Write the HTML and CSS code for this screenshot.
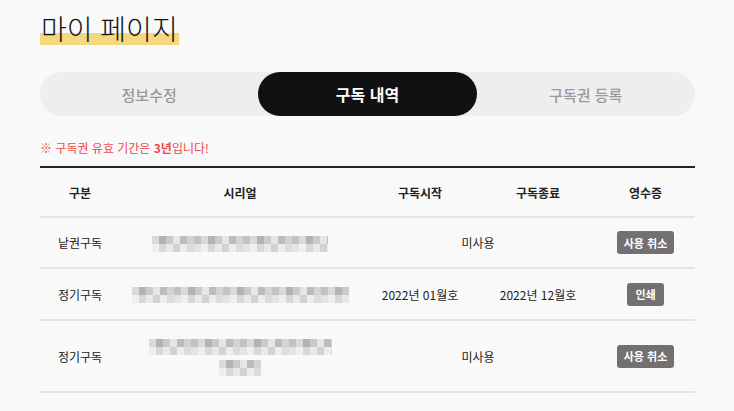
FILE: index.html
```html
<!DOCTYPE html>
<html lang="ko">
<head>
    <meta charset="UTF-8">
    <title>마이 페이지</title>
    <link rel="stylesheet" href="styles.css">
</head>
<body>
    <div class="wrap">
        <h1 class="title"><span>마이 페이지</span></h1>

        <ul class="tabs">
            <li>정보수정</li>
            <li class="on">구독 내역</li>
            <li>구독권 등록</li>
        </ul>

        <p class="notice">※ 구독권 유효 기간은 <b>3년</b>입니다!</p>

        <table class="list">
            <colgroup>
                <col class="c1">
                <col class="c2">
                <col class="c3">
                <col class="c4">
                <col class="c5">
            </colgroup>
            <thead>
                <tr>
                    <th>구분</th>
                    <th>시리얼</th>
                    <th>구독시작</th>
                    <th>구독종료</th>
                    <th>영수증</th>
                </tr>
            </thead>
            <tbody>
                <tr>
                    <td>낱권구독</td>
                    <td><span class="mosaic m1"></span></td>
                    <td colspan="2">미사용</td>
                    <td><button class="btn">사용 취소</button></td>
                </tr>
                <tr class="mid">
                    <td>정기구독</td>
                    <td><span class="mosaic m2"></span></td>
                    <td>2022년 01월호</td>
                    <td>2022년 12월호</td>
                    <td><button class="btn">인쇄</button></td>
                </tr>
                <tr class="tall">
                    <td>정기구독</td>
                    <td><span class="mosaic m3"></span><br><span class="mosaic m4"></span></td>
                    <td colspan="2">미사용</td>
                    <td><button class="btn">사용 취소</button></td>
                </tr>
            </tbody>
        </table>
    </div>
</body>
</html>
```

FILE: styles.css
```css
* {
    margin: 0;
    padding: 0;
    list-style: none;
    box-sizing: border-box;
}

body {
    background: #f9f9f9;
    font-family: "Noto Sans CJK KR", "Noto Sans", sans-serif;
    color: #222;
}

.wrap {
    width: 655px;
    margin-left: 40px;
    padding-top: 8px;
}

/* 제목 */
.title {
    font-size: 28px;
    font-weight: 300;
    line-height: 40px;
    color: #111;
}

.title span {
    background: linear-gradient(transparent 62%, #f5d77d 62%, #f5d77d 93%, transparent 93%);
    padding: 0 1px;
}

/* 탭 */
.tabs {
    display: grid;
    grid-template-columns: repeat(3, 1fr);
    height: 44px;
    margin-top: 24px;
    background: #eeeeee;
    border-radius: 22px;
}

.tabs li {
    display: flex;
    align-items: center;
    justify-content: center;
    font-size: 15px;
    font-weight: 500;
    color: #999;
    border-radius: 22px;
    cursor: pointer;
}

.tabs .on {
    background: #111;
    color: #fff;
    font-weight: 700;
    font-size: 16px;
}

.notice {
    margin-top: 23px;
    font-size: 12px;
    line-height: 18px;
    color: #f04a4a;
}

.notice b {
    font-weight: 700;
}

/* 목록 */
.list {
    width: 100%;
    margin-top: 9px;
    border-collapse: collapse;
    border-top: 2px solid #222;
    font-size: 12px;
    text-align: center;
}

.list .c1 { width: 80px; }
.list .c2 { width: 240px; }
.list .c3 { width: 120px; }
.list .c4 { width: 116px; }
.list .c5 { width: 99px; }

.list th {
    height: 50px;
    font-weight: 700;
    border-bottom: 2px solid #e4e4e4;
}

.list td {
    height: 51px;
    border-bottom: 2px solid #e4e4e4;
    color: #222;
}

.list .mid td {
    height: 52px;
}

.list .tall td {
    height: 72px;
}

.btn {
    border: 0;
    border-radius: 3px;
    background: #727071;
    color: #fff;
    font-family: inherit;
    font-size: 11px;
    font-weight: 700;
    height: 23px;
    min-width: 37px;
    padding: 0 7px;
    cursor: pointer;
}

/* 시리얼 가림 */
.mosaic {
    display: inline-block;
    height: 16px;
    vertical-align: middle;
    background:
        repeating-linear-gradient(90deg, #dcd9d9 0 7px, #b3b3b7 7px 14px, #cacaca 14px 21px, #e6e6e6 21px 28px, #bcbcc0 28px 35px, #d3d3d3 35px 42px, #c2c2c2 42px 49px) top / 100% 8px no-repeat,
        repeating-linear-gradient(90deg, #efefef 0 7px, #d8d8dc 7px 14px, #e9e9e9 14px 21px, #d2d2d2 21px 28px, #ededed 28px 35px, #dcdcdc 35px 42px, #e4e4e4 42px 49px) bottom / 100% 8px no-repeat;
}

.m1 { width: 176px; }
.m2 { width: 217px; }
.m3 { width: 183px; }
.m4 { width: 42px; margin-top: 5px; }
```
